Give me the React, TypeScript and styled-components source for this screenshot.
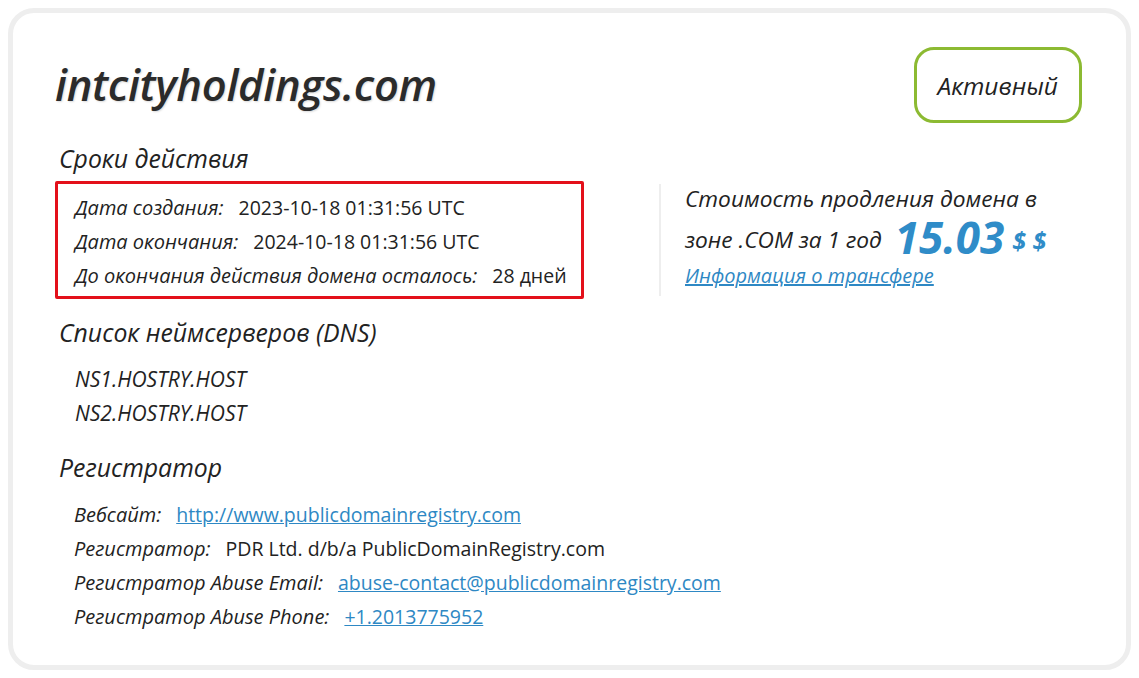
import React from 'react';
import styled, { createGlobalStyle } from 'styled-components';

const GlobalStyle = createGlobalStyle`
  html, body {
    margin: 0;
    padding: 0;
    background: #ffffff;
  }
  body {
    font-family: "Open Sans", "Noto Sans", sans-serif;
    color: #222;
  }
`;

const Page = styled.div`
  width: 1139px;
  height: 678px;
  padding: 8px;
  box-sizing: border-box;
`;

const Card = styled.div`
  height: 100%;
  box-sizing: border-box;
  border: 5px solid #eeeeee;
  border-radius: 26px;
  padding: 36px 44px 0 42px;
  display: flex;
  flex-direction: column;
`;

const Header = styled.div`
  display: flex;
  justify-content: space-between;
  align-items: flex-start;
`;

const DomainTitle = styled.h1`
  margin: 14px 0 0 0;
  font-size: 43.5px;
  font-style: italic;
  font-weight: 600;
  letter-spacing: -0.3px;
  color: #2b2b2b;
  text-shadow: 1px 1px 2px rgba(0, 0, 0, 0.15);
  line-height: 1;
`;

const StatusBadge = styled.div`
  border: 3px solid #8cba32;
  border-radius: 20px;
  padding: 0 21px;
  height: 70px;
  margin-top: -2px;
  display: flex;
  align-items: center;
  font-size: 24.5px;
  font-style: italic;
  color: #222;
`;

const SectionTitle = styled.h2`
  margin: 0 0 0 4px;
  font-size: 24.8px;
  font-weight: 400;
  font-style: italic;
  color: #222;
  line-height: 30px;
`;

const TermsRow = styled.div`
  display: flex;
  align-items: center;
  margin-top: 8px;
`;

const HighlightBox = styled.div`
  border: 3px solid #e3101a;
  border-radius: 2px;
  padding: 6px 10px 4px 17px;
  width: 529px;
  box-sizing: border-box;
`;

const InfoList = styled.div<{ $indent?: number }>`
  display: flex;
  flex-direction: column;
  padding-left: ${(p) => p.$indent ?? 0}px;
  margin-top: 15px;
`;

const InfoRow = styled.div`
  height: 34px;
  display: flex;
  align-items: center;
  font-size: 19.5px;
  white-space: nowrap;
`;

const Label = styled.span`
  font-style: italic;
  font-size: 20px;
  margin-right: 15px;
`;

const Value = styled.span`
  color: #222;
`;

const Link = styled.a`
  color: #2e88c4;
  text-decoration: underline;
`;

const Divider = styled.div`
  width: 2px;
  height: 112px;
  background: #eeeeee;
  margin: 0 24px 0 75px;
`;

const PriceBox = styled.div`
  display: flex;
  flex-direction: column;
  font-style: italic;
  font-size: 22.7px;
  color: #222;
  margin-top: -9px;
`;

const PriceLine = styled.div`
  display: flex;
  align-items: baseline;
  height: 38px;
  white-space: nowrap;
`;

const AmountLine = styled(PriceLine)`
  height: 36px;
  align-items: flex-end;
`;

const Price = styled.span`
  font-size: 44px;
  font-weight: 700;
  line-height: 40px;
  color: #2f8cc8;
  margin-left: 13px;
`;

const Currency = styled.span`
  font-size: 25px;
  font-weight: 700;
  color: #2f8cc8;
  margin-left: 8px;
`;

const Tail = styled.span`
  line-height: 34px;
`;

const TransferLink = styled.a`
  color: #2e88c4;
  text-decoration: underline;
  font-size: 20px;
  margin-top: 5px;
`;

const Section = styled.div<{ $gap: number }>`
  margin-top: ${(p) => p.$gap}px;
`;

const NsItem = styled.div`
  height: 34px;
  display: flex;
  align-items: center;
  font-size: 21px;
  font-style: italic;
`;

export default function App() {
  return (
    <>
      <GlobalStyle />
      <Page>
        <Card>
          <Header>
            <DomainTitle>intcityholdings.com</DomainTitle>
            <StatusBadge>Активный</StatusBadge>
          </Header>

          <Section $gap={20}>
            <SectionTitle>Сроки действия</SectionTitle>
            <TermsRow>
              <HighlightBox>
                <InfoRow>
                  <Label>Дата создания:</Label>
                  <Value>2023-10-18 01:31:56 UTC</Value>
                </InfoRow>
                <InfoRow>
                  <Label>Дата окончания:</Label>
                  <Value>2024-10-18 01:31:56 UTC</Value>
                </InfoRow>
                <InfoRow>
                  <Label>До окончания действия домена осталось:</Label>
                  <Value>28 дней</Value>
                </InfoRow>
              </HighlightBox>
              <Divider />
              <PriceBox>
                <PriceLine>Стоимость продления домена в</PriceLine>
                <AmountLine>
                  <Tail>зоне .COM за 1 год</Tail>
                  <Price>15.03</Price>
                  <Currency>
                    <Tail>$ $</Tail>
                  </Currency>
                </AmountLine>
                <TransferLink href="#">Информация о трансфере</TransferLink>
              </PriceBox>
            </TermsRow>
          </Section>

          <Section $gap={18}>
            <SectionTitle>Список неймсерверов (DNS)</SectionTitle>
            <InfoList $indent={20}>
              <NsItem>NS1.HOSTRY.HOST</NsItem>
              <NsItem>NS2.HOSTRY.HOST</NsItem>
            </InfoList>
          </Section>

          <Section $gap={22}>
            <SectionTitle>Регистратор</SectionTitle>
            <InfoList $indent={19}>
              <InfoRow>
                <Label>Вебсайт:</Label>
                <Link href="#">http://www.publicdomainregistry.com</Link>
              </InfoRow>
              <InfoRow>
                <Label>Регистратор:</Label>
                <Value>PDR Ltd. d/b/a PublicDomainRegistry.com</Value>
              </InfoRow>
              <InfoRow>
                <Label>Регистратор Abuse Email:</Label>
                <Link href="#">abuse-contact@publicdomainregistry.com</Link>
              </InfoRow>
              <InfoRow>
                <Label>Регистратор Abuse Phone:</Label>
                <Link href="#">+1.2013775952</Link>
              </InfoRow>
            </InfoList>
          </Section>
        </Card>
      </Page>
    </>
  );
}
